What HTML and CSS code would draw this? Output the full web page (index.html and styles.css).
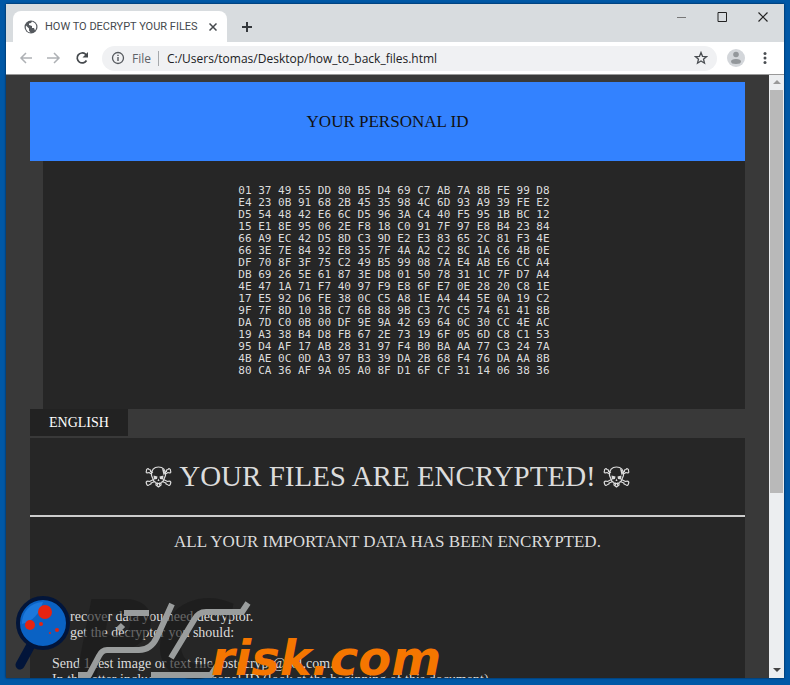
FILE: index.html
```html
<!DOCTYPE html>
<html lang="en">

<head>
    <meta charset="UTF-8">
    <meta name="viewport" content="width=device-width, initial-scale=1.0">
    <title>HOW TO DECRYPT YOUR FILES</title>
    <link rel="stylesheet" href="styles.css">
</head>

<body>
<!-- shared icon -->
<svg class="defs" width="0" height="0">
    <symbol id="skull" viewBox="0 0 27 22">
        <g fill="none" stroke="currentColor" stroke-width="1.2" stroke-linejoin="round">
            <path d="M8 13 6.500 9.500C6 4 9 1 13.500 1S21 4 20.500 9.500L19 13l-1 2.500-2 1V19l-2.500 2-2.500-2v-2.500l-2-1z"/>
            <path d="M6.500 8 4 6.500C2 7.500.5 6.500 1.500 5c-.5-2 1.500-3 2.500-1.500 1.500 0 2 1 1.500 2L8 6.500M20.500 8 23 6.500c2 1 3.500 0 2.500-1.500.5-2-1.500-3-2.500-1.500-1.500 0-2 1-1.500 2L19 6.500"/>
            <path d="m8.500 13.500-4 2C2.500 14.500.500 15.500 1.500 17.500c0 2 2 2.500 3 1 1.500 0 2-1 1.500-1.500l4-1.500M18.500 13.500l4 2c2-1 4 0 3 2 0 2-2 2.500-3 1-1.500 0-2-1-1.500-1.500l-4-1.500"/>
            <path d="M11 17.500h5M12.500 16.500v3M14.500 16.500v3"/>
        </g>
        <path fill="currentColor" d="M8.500 9.500 12.500 10.500 12 13l-3 .5zM18.500 9.500 14.500 10.500 15 13l3 .5zM13.500 12.500l1 2.500h-2zM17 2.500l2 1.500 1 4-1.500 1z"/>
    </symbol>
</svg>

<div class="window">
    <div class="titlebar">
        <div class="tab">
            <svg width="14" height="14" viewBox="0 0 14 14">
                <circle cx="7" cy="7" r="6.500" fill="#55595e"/>
                <path d="M2 5.500 5 8.500v2l1.500 2C3.500 12.500 1 9 2 5.500zM8 1.500 7 3 5 3.500V5l3 1v2h2l1 2.500C13.500 7 12.500 3 8 1.500z" fill="#fff"/>
            </svg>
            <span class="tab-title">HOW TO DECRYPT YOUR FILES</span>
            <button class="icon-btn" aria-label="Close tab">
                <svg width="8" height="8" viewBox="0 0 8 8"><path d="m.5.5 7 7m0-7-7 7" stroke="#45494d" stroke-width="1.500"/></svg>
            </button>
        </div>
        <button class="icon-btn new-tab" aria-label="New tab">
            <svg width="12" height="12" viewBox="0 0 12 12"><path d="M6 1v10M1 6h10" stroke="#34383c" stroke-width="2"/></svg>
        </button>
        <div class="controls">
            <button class="icon-btn" aria-label="Minimize">
                <svg width="10" height="10" viewBox="0 0 10 10"><path d="M1 5.500h9" stroke="#777"/></svg>
            </button>
            <button class="icon-btn" aria-label="Maximize">
                <svg width="10" height="10" viewBox="0 0 10 10"><path d="M1 .5h8.500v9H1z" fill="none" stroke="#222"/></svg>
            </button>
            <button class="icon-btn" aria-label="Close">
                <svg width="10" height="10" viewBox="0 0 10 10"><path d="m.5.5 9 9m0-9-9 9" stroke="#222" stroke-width="1.200"/></svg>
            </button>
        </div>
    </div>

    <div class="toolbar">
        <button class="icon-btn" aria-label="Back">
            <svg width="14" height="12" viewBox="0 0 14 12"><path d="M13 6H2m5-5L2 6l5 5" fill="none" stroke="#aeb1b5" stroke-width="1.500"/></svg>
        </button>
        <button class="icon-btn" aria-label="Forward">
            <svg width="14" height="12" viewBox="0 0 14 12"><path d="M0 6h12M7 1l5 5-5 5" fill="none" stroke="#aeb1b5" stroke-width="1.500"/></svg>
        </button>
        <button class="icon-btn" aria-label="Reload">
            <svg width="14" height="14" viewBox="0 0 14 14"><path d="M11.500 9.500A5 5 0 1 1 10.500 3.200L12 4.700" fill="none" stroke="#45494d" stroke-width="1.700"/><path d="M13 1v5.500H7.500z" fill="#45494d"/></svg>
        </button>
        <div class="omnibox">
            <svg width="14" height="14" viewBox="0 0 14 14"><circle cx="7" cy="7" r="5.500" fill="none" stroke="#55595e" stroke-width="1.300"/><path d="M7 6v4M7 3.700v1.300" stroke="#55595e" stroke-width="1.400"/></svg>
            <label for="url">File</label>
            <input id="url" type="text" value="C:/Users/tomas/Desktop/how_to_back_files.html">
            <button class="icon-btn" aria-label="Bookmark">
                <svg width="14" height="14" viewBox="0 0 14 14"><path d="m7 1.500 1.500 3.800 4 .3-3 2.600 1 4L7 10l-3.500 2.200 1-4-3-2.600 4-.3z" fill="none" stroke="#4a4e52" stroke-width="1.300"/></svg>
            </button>
        </div>
        <button class="icon-btn avatar" aria-label="Profile">
            <svg width="18" height="18" viewBox="0 0 18 18"><circle cx="9" cy="9" r="9" fill="#d3d6da"/><circle cx="9" cy="5.500" r="2.800" fill="#93979b"/><ellipse cx="9" cy="12.500" rx="5" ry="2.500" fill="#93979b"/></svg>
        </button>
        <button class="icon-btn" aria-label="Menu">
            <svg width="4" height="12" viewBox="0 0 4 12" fill="#4a4e52"><circle cx="2" cy="1.500" r="1.500"/><circle cx="2" cy="6" r="1.500"/><circle cx="2" cy="10.500" r="1.500"/></svg>
        </button>
    </div>

    <div class="viewport">
        <div class="page">
            <div class="id-title">YOUR PERSONAL ID</div>
            <div class="id-box">
<pre>01 37 49 55 DD 80 B5 D4 69 C7 AB 7A 8B FE 99 D8
E4 23 0B 91 68 2B 45 35 98 4C 6D 93 A9 39 FE E2
D5 54 48 42 E6 6C D5 96 3A C4 40 F5 95 1B BC 12
15 E1 8E 95 06 2E F8 18 C0 91 7F 97 E8 B4 23 84
66 A9 EC 42 D5 8D C3 9D E2 E3 83 65 2C 81 F3 4E
66 3E 7E 84 92 E8 35 7F 4A A2 C2 8C 1A C6 4B 0E
DF 70 8F 3F 75 C2 49 B5 99 08 7A E4 AB E6 CC A4
DB 69 26 5E 61 87 3E D8 01 50 78 31 1C 7F D7 A4
4E 47 1A 71 F7 40 97 F9 E8 6F E7 0E 28 20 C8 1E
17 E5 92 D6 FE 38 0C C5 A8 1E A4 44 5E 0A 19 C2
9F 7F 8D 10 3B C7 6B 88 9B C3 7C C5 74 61 41 8B
DA 7D C0 0B 00 DF 9E 9A 42 69 64 0C 30 CC 4E AC
19 A3 38 B4 D8 FB 67 2E 73 19 6F 05 6D C8 C1 53
95 D4 AF 17 AB 28 31 97 F4 B0 BA AA 77 C3 24 7A
4B AE 0C 0D A3 97 B3 39 DA 2B 68 F4 76 DA AA 8B
80 CA 36 AF 9A 05 A0 8F D1 6F CF 31 14 06 38 36</pre>
            </div>

            <button class="lang">ENGLISH</button>

            <div class="note">
                <h1>
                    <svg class="skull"><use href="#skull"/></svg>
                    YOUR FILES ARE ENCRYPTED!
                    <svg class="skull"><use href="#skull"/></svg>
                </h1>
                <h2>ALL YOUR IMPORTANT DATA HAS BEEN ENCRYPTED.</h2>
                <div class="text">
                    <p>To recover data you need decryptor.<br>To get the decryptor you should:</p>
                    <p>Send 1 test image or text file fostecrypt@aol.com.<br>In the letter include your personal ID (look at the beginning of this document).</p>
                </div>
            </div>
        </div>

        <div class="scrollbar">
            <svg width="8" height="5" viewBox="0 0 8 5"><path d="M4 0 8 4H0z" fill="#999"/></svg>
            <div class="thumb"></div>
            <svg width="8" height="5" viewBox="0 0 8 5"><path d="M0 0h8L4 4z" fill="#444"/></svg>
        </div>
    </div>
</div>

<!-- watermark -->
<svg class="watermark" width="440" height="90" viewBox="10 593 440 90">
    <text class="wm-pc" x="74 156" y="677">PC</text>
    <g fill="none" stroke="#9a9d9d" stroke-width="6" stroke-linejoin="round">
        <path d="M172 604 157 637Q151 650 139 650H107Q102 650 99 656L89 675H78M124 613H149M123 625 118 630"/>
        <path d="M248 603 242 612H206Q198 612 194 620L171 658M151 675H211L217 666"/>
    </g>
    <text class="wm-risk" x="211" y="675">risk.com</text>
    <path d="M31 645 20 665" stroke="#02153a" stroke-width="9" stroke-linecap="round"/>
    <circle cx="43" cy="623" r="25" fill="#0a62c4" stroke="#02153a" stroke-width="4"/>
    <path d="M22 624A21 21 0 0 1 43 602C39 614 33 621 22 624z" fill="#1c78dc"/>
    <g fill="#e62410"><circle cx="45" cy="612" r="7"/><circle cx="30" cy="625" r="5"/><circle cx="41" cy="624" r="2"/><circle cx="57" cy="630" r="2"/><circle cx="50" cy="633" r="1"/></g>
</svg>
</body>

</html>
```
FILE: styles.css
```css
* {
    margin: 0;
    padding: 0;
    box-sizing: border-box;
}

body {
    height: 100vh;
    padding: 4px 6px 7px;
    display: flex;
    overflow: hidden;
    position: relative;
    background: #0058a6;
    font-family: "Liberation Serif", "Times New Roman", serif;
}

svg {
    display: block;
    flex: none;
}

.defs {
    position: absolute;
}

.window {
    flex: 1;
    min-width: 0;
    display: flex;
    flex-direction: column;
    box-shadow: 0 0 2px #001c3a;
    font-size: 12px;
}

.icon-btn {
    display: flex;
    align-items: center;
    justify-content: center;
    border: 0;
    background: none;
}

/* browser chrome */
.titlebar {
    height: 38px;
    padding: 7px 16px 0 7px;
    display: flex;
    background: #d8dcdf;
}

.tab {
    width: 214px;
    padding: 0 10px 0 11px;
    display: flex;
    align-items: center;
    gap: 7px;
    border-radius: 8px 8px 0 0;
    background: #fff;
    color: #45494d;
    font-family: Roboto, sans-serif;
    font-size: 11px;
}

.tab-title {
    flex: 1;
    white-space: nowrap;
}

.new-tab {
    margin-left: 14px;
}

.controls {
    margin-left: auto;
    height: 12px;
    display: flex;
    gap: 31px;
}

.toolbar {
    height: 33px;
    padding: 0 17px 0 13px;
    display: flex;
    align-items: center;
    gap: 14px;
    background: #fff;
    border-bottom: 1px solid #999;
    font-family: "Open Sans", "Noto Sans", sans-serif;
}

.omnibox {
    flex: 1;
    height: 25px;
    margin: 0 -4px 0 -1px;
    padding: 0 9px;
    display: flex;
    align-items: center;
    border-radius: 13px;
    background: #f0f1f3;
}

.omnibox label {
    margin: 0 8px 0 7px;
    padding-right: 7px;
    border-right: 1px solid #a5a8ab;
    color: #5f6368;
    line-height: 15px;
}

.omnibox input {
    flex: 1;
    min-width: 0;
    border: 0;
    background: none;
    color: #202124;
    font: inherit;
}

.avatar {
    margin-right: 4px;
}

/* page */
.viewport {
    flex: 1;
    min-height: 0;
    display: flex;
    overflow: hidden;
    background: #393939;
}

.page {
    flex: 1;
    padding: 7px 24px 0;
    color: #dcdcdc;
}

.id-title {
    background: #3382ff;
    color: #111;
    font-size: 17px;
    line-height: 79px;
    text-align: center;
}

.id-box {
    margin-left: 13px;
    padding: 24px 0 32px;
    background: #262626;
}

.id-box pre {
    font-family: "DejaVu Sans Mono", monospace;
    font-size: 11px;
    line-height: 12px;
    text-align: center;
}

.lang {
    display: block;
    height: 27px;
    margin-bottom: 2px;
    padding: 0 19px;
    border: 0;
    background: #222;
    color: #fff;
    font-family: inherit;
    font-size: 14px;
}

.note {
    background: #262626;
    min-height: 400px;
}

h1 {
    height: 79px;
    display: flex;
    align-items: center;
    justify-content: center;
    gap: 7px;
    border-bottom: 2px solid #ccc;
    font-size: 29px;
    font-weight: normal;
}

.skull {
    width: 27px;
    height: 22px;
}

h2 {
    font-size: 17px;
    font-weight: normal;
    line-height: 20px;
    margin: 15px 0 57px;
    text-align: center;
}

.text {
    padding: 0 22px;
    font-size: 14px;
    line-height: 16px;
}

.text p {
    margin-bottom: 15px;
}

.scrollbar {
    width: 15px;
    padding: 5px 1px;
    display: flex;
    flex-direction: column;
    align-items: center;
    gap: 5px;
    background: #eceef0;
}

.thumb {
    width: 100%;
    height: 68%;
    margin-bottom: auto;
    background: #b9b9b9;
}

/* lies over the page */
.watermark {
    position: absolute;
    left: 10px;
    bottom: 2px;
    pointer-events: none;
}

.wm-pc,
.wm-risk {
    font-family: "DejaVu Sans", sans-serif;
    font-weight: bold;
    font-style: italic;
}

.wm-pc {
    font-size: 107px;
    fill: #191919;
    fill-opacity: .6;
}

.wm-risk {
    font-size: 48px;
    fill: #f57600;
}
```
